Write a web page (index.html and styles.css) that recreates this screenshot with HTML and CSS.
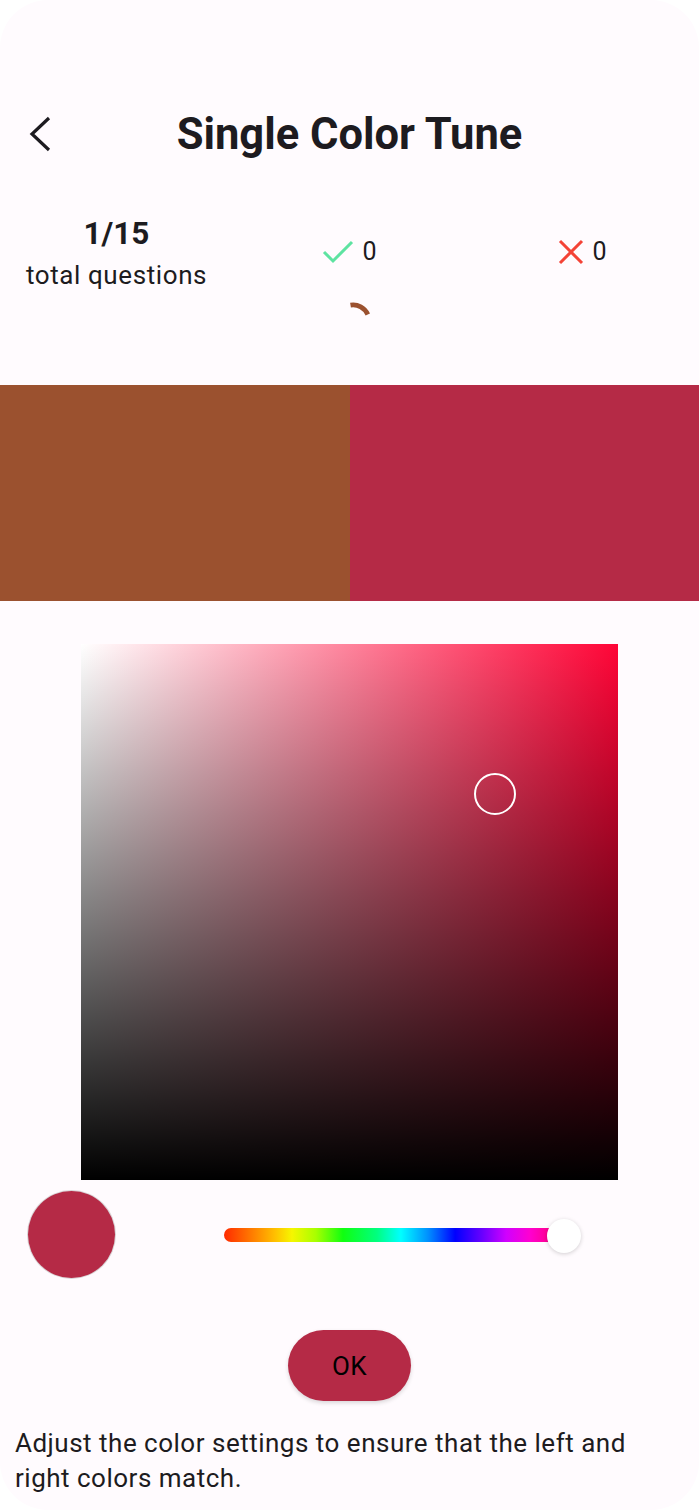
FILE: index.html
```html
<!DOCTYPE html>
<html>
<head>
    <title>Single Color Tune</title>
    <link rel="stylesheet" href="styles.css">
</head>
<body>
    <div class="screen">
        <header class="appbar">
            <button class="back" aria-label="Back">
                <svg width="24" height="36" viewBox="0 0 24 36">
                    <polyline points="22,2 5,18 22,34" fill="none" stroke="#1d1b20" stroke-width="3.2"/>
                </svg>
            </button>
            <h1>Single Color Tune</h1>
            <span></span>
        </header>

        <section class="stats">
            <div class="stat">
                <div class="count">1/15</div>
                <div class="caption">total questions</div>
            </div>
            <div class="stat score">
                <svg width="32" height="26" viewBox="0 0 32 26">
                    <polyline points="2,13 11,22 30,3" fill="none" stroke="#5ee3a1" stroke-width="3"/>
                </svg>
                <span>0</span>
            </div>
            <div class="stat score">
                <svg width="26" height="26" viewBox="0 0 26 26">
                    <path d="M2 2 L24 24 M24 2 L2 24" fill="none" stroke="#f44336" stroke-width="3"/>
                </svg>
                <span>0</span>
            </div>
        </section>

        <div class="loader">
            <svg width="40" height="40" viewBox="0 0 40 40">
                <!-- progress arc, roughly from 12 o'clock to 2 o'clock -->
                <path d="M17.5 4.2 A16 16 0 0 1 34.8 13.5" fill="none" stroke="#9b512f" stroke-width="4.8"/>
            </svg>
        </div>

        <div class="swatches">
            <div class="swatch target"></div>
            <div class="swatch current"></div>
        </div>

        <div class="picker">
            <div class="cursor"></div>
        </div>

        <div class="controls">
            <div class="preview"></div>
            <div class="hue">
                <div class="track"></div>
                <div class="thumb"></div>
            </div>
        </div>

        <div class="actions">
            <button class="ok">OK</button>
        </div>

        <p class="hint">Adjust the color settings to ensure that the left and right colors match.</p>
    </div>
</body>
</html>
```

FILE: styles.css
```css
body {
    margin: 0;
    padding: 0;
    background-color: #ffffff;
    font-family: Roboto, "Noto Sans", sans-serif;
    color: #1d1b20;
}

.screen {
    width: 699px;
    height: 1510px;
    background-color: #fffbfe;
    border-radius: 48px;
    overflow: hidden;
}

/* top bar */
.appbar {
    display: grid;
    grid-template-columns: 1fr auto 1fr;
    align-items: center;
    height: 64px;
    margin-top: 102px;
}

.back {
    justify-self: start;
    margin-left: 27px;
    padding: 0;
    border: none;
    background: none;
    display: flex;
}

h1 {
    margin: 0;
    font-size: 43.5px;
    font-weight: 700;
    letter-spacing: 0;
}

/* score row */
.stats {
    display: grid;
    grid-template-columns: repeat(3, 1fr);
    margin-top: 50px;
    height: 75px;
}

.stat {
    display: flex;
    flex-direction: column;
    align-items: center;
}

.count {
    font-size: 31.5px;
    font-weight: 700;
    line-height: 36px;
}

.caption {
    margin-top: 7px;
    font-size: 26px;
    line-height: 32px;
    letter-spacing: 0.6px;
}

.score {
    flex-direction: row;
    justify-content: center;
    gap: 8px;
    padding-top: 22px;
    align-items: flex-start;
    font-size: 25px;
    line-height: 28px;
}

.score svg {
    margin-top: 1px;
}

.loader {
    display: flex;
    justify-content: center;
    margin-top: 10px;
    height: 40px;
    padding-left: 6px;
}

/* the two colours side by side */
.swatches {
    display: flex;
    height: 216px;
    margin-top: 44px;
}

.swatch {
    flex: 1;
}

.target {
    background-color: #9b512f;
}

.current {
    background-color: #b52a46;
}

/* saturation / value square */
.picker {
    position: relative;
    width: 537px;
    height: 536px;
    margin: 43px auto 0;
    background:
        linear-gradient(to top, #000, rgba(0, 0, 0, 0)),
        linear-gradient(to right, #fff, hsl(348, 100%, 51%));
}

.cursor {
    position: absolute;
    left: 393px;
    top: 129px;
    width: 42px;
    height: 42px;
    border: 2px solid #fff;
    border-radius: 50%;
    box-sizing: border-box;
}

.controls {
    display: flex;
    align-items: center;
    margin-top: 11px;
    padding-left: 28px;
}

.preview {
    width: 87px;
    height: 87px;
    border-radius: 50%;
    background-color: #b52a46;
    box-shadow: 0 0 0 1px #d9d4d6;
}

.hue {
    position: relative;
    margin-left: 109px;
    width: 340px;
    height: 36px;
    display: flex;
    align-items: center;
}

.track {
    width: 100%;
    height: 14px;
    border-radius: 7px;
    background: linear-gradient(to right,
        #ff2a00 0%, #ff7a00 8%, #ffc000 15%, #f6f600 20%, #a8ff00 27%,
        #10ff10 35%, #00ff80 45%, #00ffff 52%, #0090ff 60%, #0000ff 68%,
        #6a00ff 76%, #d000ff 83%, #ff00d0 90%, #ff0060 100%);
}

.thumb {
    position: absolute;
    right: -17px;
    top: 2px;
    width: 34px;
    height: 34px;
    border-radius: 50%;
    background-color: #fff;
    box-shadow: 0 1px 4px rgba(0, 0, 0, 0.18);
}

.actions {
    display: flex;
    justify-content: center;
    margin-top: 52px;
}

.ok {
    width: 123px;
    height: 71px;
    border: none;
    border-radius: 36px;
    background-color: #b52a46;
    color: #000;
    font-family: Roboto, sans-serif;
    font-size: 26px;
    letter-spacing: 0.4px;
    box-shadow: 0 2px 4px rgba(0, 0, 0, 0.15);
}

.hint {
    margin: 25px 15px 0;
    font-size: 26px;
    line-height: 35px;
    letter-spacing: 0.5px;
}
```
